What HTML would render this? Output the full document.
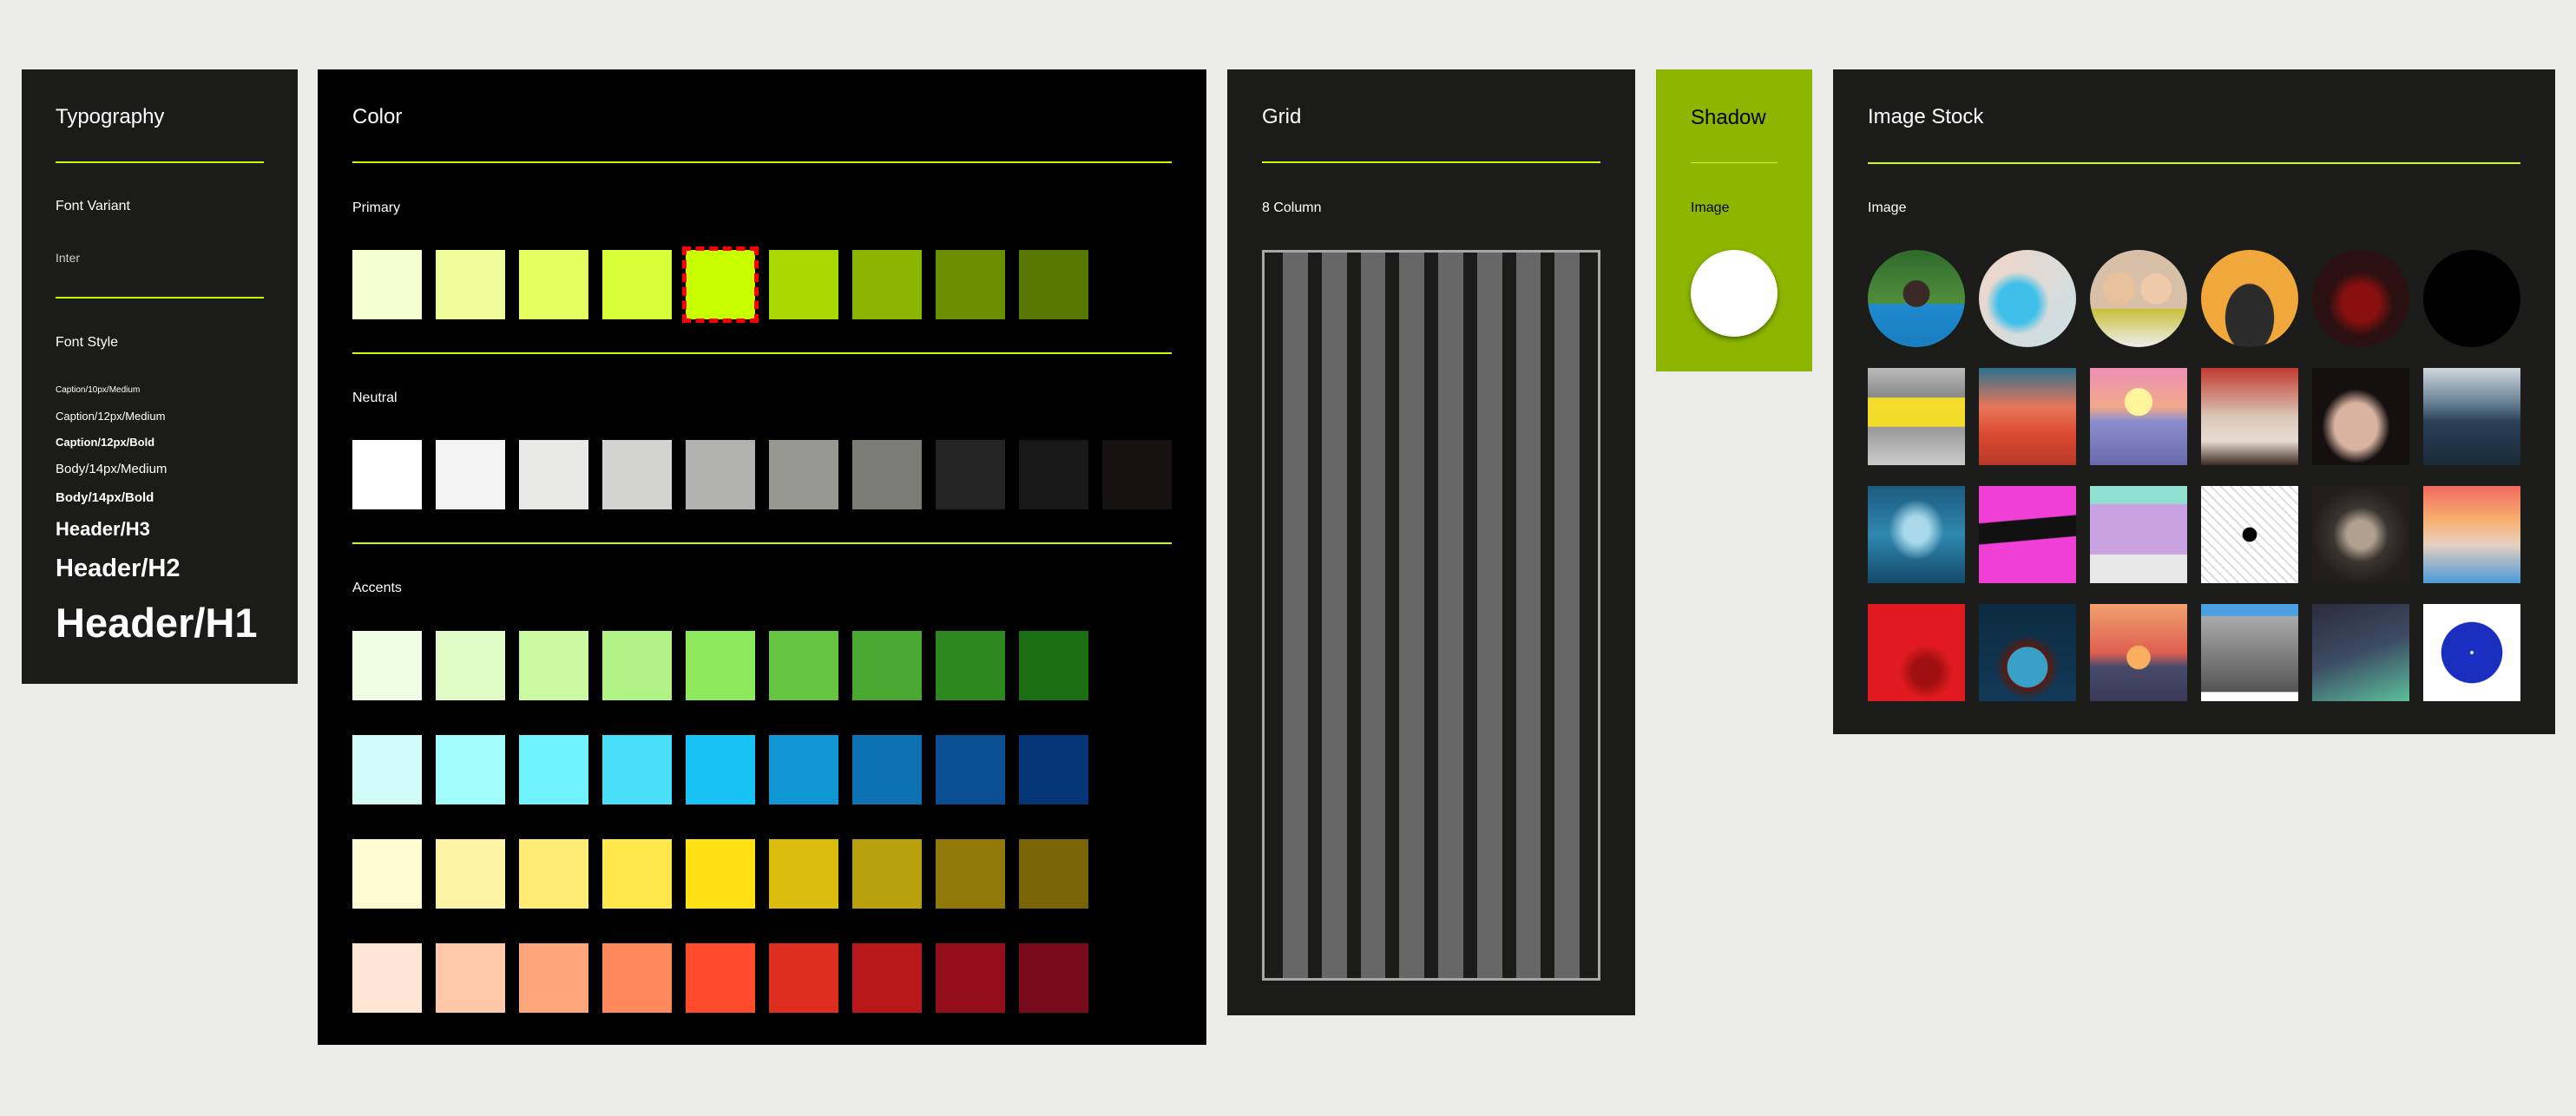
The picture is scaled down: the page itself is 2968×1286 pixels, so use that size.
<!DOCTYPE html>
<html><head><meta charset="utf-8"><style>
*{margin:0;padding:0;box-sizing:border-box}
body{width:2968px;height:1286px;background:#ebebe9;position:relative;overflow:hidden;font-family:"Liberation Sans","Noto Sans CJK JP",sans-serif;color:#fff}
.p{position:absolute}
.t{position:absolute;white-space:nowrap;line-height:1}
.title{font-size:24px}
.lab{font-size:16px}
.hr{position:absolute;height:2px;background:#c8ff00}
.sw{position:absolute;width:80px;height:80px}
.im{position:absolute;width:112px;height:112px}
.c{border-radius:50%}
</style></head><body>

<!-- Typography -->
<div class="p" style="left:25px;top:80px;width:318px;height:708px;background:#1b1b1a">
  <div class="t title" style="left:39px;top:43px">Typography</div>
  <div class="hr" style="left:39px;top:106px;width:240px"></div>
  <div class="t lab" style="left:39px;top:150px">Font Variant</div>
  <div class="t" style="left:39px;top:210px;font-size:14px;color:#ccc">Inter</div>
  <div class="hr" style="left:39px;top:262px;width:240px"></div>
  <div class="t lab" style="left:39px;top:307px">Font Style</div>
  <div class="t" style="left:39px;top:365px;font-size:10px">Caption/10px/Medium</div>
  <div class="t" style="left:39px;top:393px;font-size:13px">Caption/12px/Medium</div>
  <div class="t" style="left:39px;top:423px;font-size:13px;font-weight:bold">Caption/12px/Bold</div>
  <div class="t" style="left:39px;top:453px;font-size:15px">Body/14px/Medium</div>
  <div class="t" style="left:39px;top:486px;font-size:15px;font-weight:bold">Body/14px/Bold</div>
  <div class="t" style="left:39px;top:519px;font-size:22px;font-weight:bold">Header/H3</div>
  <div class="t" style="left:39px;top:561px;font-size:29px;font-weight:bold">Header/H2</div>
  <div class="t" style="left:39px;top:614px;font-size:47px;font-weight:bold">Header/H1</div>
</div>

<!-- Color -->
<div class="p" style="left:366px;top:80px;width:1024px;height:1124px;background:#000">
  <div class="t title" style="left:40px;top:43px">Color</div>
  <div class="hr" style="left:40px;top:106px;width:944px"></div>
  <div class="t lab" style="left:40px;top:152px">Primary</div>
  <div class="hr" style="left:40px;top:326px;width:944px"></div>
  <div class="t lab" style="left:40px;top:371px">Neutral</div>
  <div class="hr" style="left:40px;top:545px;width:944px"></div>
  <div class="t lab" style="left:40px;top:590px">Accents</div>
</div>
<div id="sw"></div>

<!-- Grid -->
<div class="p" style="left:1414px;top:80px;width:470px;height:1090px;background:#1b1b1a">
  <div class="t title" style="left:40px;top:43px">Grid</div>
  <div class="hr" style="left:40px;top:106px;width:390px"></div>
  <div class="t lab" style="left:40px;top:152px">8 Column</div>
  <div class="p" style="left:40px;top:208px;width:390px;height:842px;border:3px solid #a8a8a8">
    <div class="p" style="left:21px;top:0;width:29px;height:836px;background:#676767"></div>
    <div class="p" style="left:66px;top:0;width:29px;height:836px;background:#676767"></div>
    <div class="p" style="left:111px;top:0;width:28px;height:836px;background:#676767"></div>
    <div class="p" style="left:155px;top:0;width:29px;height:836px;background:#676767"></div>
    <div class="p" style="left:200px;top:0;width:29px;height:836px;background:#676767"></div>
    <div class="p" style="left:245px;top:0;width:29px;height:836px;background:#676767"></div>
    <div class="p" style="left:290px;top:0;width:28px;height:836px;background:#676767"></div>
    <div class="p" style="left:334px;top:0;width:29px;height:836px;background:#676767"></div>
  </div>
</div>

<!-- Shadow -->
<div class="p" style="left:1908px;top:80px;width:180px;height:348px;background:#8cb600;color:#000">
  <div class="t title" style="left:40px;top:44px">Shadow</div>
  <div class="hr" style="left:40px;top:107px;width:100px;height:1px;background:#c8ff00"></div>
  <div class="t lab" style="left:40px;top:152px">Image</div>
  <div class="p" style="left:40px;top:208px;width:100px;height:100px;border-radius:50%;background:#fff;box-shadow:0 3px 6px rgba(40,60,0,.6)"></div>
</div>

<!-- Image Stock -->
<div class="p" style="left:2112px;top:80px;width:832px;height:766px;background:#1b1b1a">
  <div class="t title" style="left:40px;top:43px">Image Stock</div>
  <div class="hr" style="left:40px;top:107px;width:752px"></div>
  <div class="t lab" style="left:40px;top:152px">Image</div>
</div>
<div id="ims"></div>

<script>
var rows=[
 [288,["#f4fdd0","#effd9b","#e5ff62","#d8ff3a","#c8ff00","#a8d800","#8cb500","#6b8e00","#567800"]],
 [507,["#ffffff","#f3f3f3","#e9e9e8","#d3d3d1","#b1b2af","#989893","#7c7c77","#232323","#181818","#161212"]],
 [727,["#effde3","#e0fbc6","#ccf8a2","#b1f287","#8de85b","#66c443","#49a831","#2e8820","#1b6e12"]],
 [847,["#d2fcf8","#a2fcfb","#70f2fd","#49dff9","#16c3f4","#1097d3","#0c72b3","#084e90","#053778"]],
 [967,["#fffbd3","#fff4a5","#ffec75","#ffe74b","#ffe014","#dabd0f","#b8a00c","#907908","#786405"]],
 [1087,["#ffe5d4","#ffc9a9","#ffa67d","#ff895c","#ff4b2b","#dd2e1f","#b8181a","#940d1b","#780a1b"]]];
var h="";
rows.forEach(function(r,ri){r[1].forEach(function(c,i){
 var ex=(ri==0&&i==4)?"outline:5px dashed #f00;outline-offset:-1px;":"";
 h+='<div class="sw" style="left:'+(406+i*96)+'px;top:'+r[0]+'px;background:'+c+';'+ex+'"></div>';});});
document.getElementById("sw").outerHTML=h;
var im=[
 [288,1,["radial-gradient(circle at 50% 45%,#3a2a25 0 18%,transparent 19%),linear-gradient(#2f6a2a 0,#4f8f3c 55%,#1e8ad0 56%,#1a7ec0 100%)",
 "radial-gradient(circle at 40% 55%,#3fc0ea 0 25%,transparent 40%),linear-gradient(135deg,#f2d6c6,#c8dfe8)",
 "radial-gradient(circle at 30% 40%,#e7c09c 0 18%,transparent 19%),radial-gradient(circle at 68% 40%,#efcaaa 0 17%,transparent 18%),linear-gradient(#d8c0a8 0,#d8c0a8 60%,#c8c03a 61%,#eee 100%)",
 "radial-gradient(ellipse at 50% 70%,#2b2b2b 0 35%,transparent 36%),#f0a83a",
 "radial-gradient(circle at 50% 55%,#8a1010 0 25%,transparent 45%),#2a1010",
 "#000"]],
 [424,0,["linear-gradient(#bbb,#888 30%,transparent 31%,transparent 60%,#999 61%,#ccc),linear-gradient(#f5e030,#f0d820)",
 "linear-gradient(#2b6f8c,#e8775a 40%,#d9472f 70%,#b83a2a)",
 "radial-gradient(circle at 50% 35%,#fff59a 0 17%,transparent 18%),linear-gradient(#ec8fb5,#f3a98a 40%,#8a8dcb 55%,#6a6aae)",
 "linear-gradient(#c23a30,#d8c7b7 50%,#e8dcd0 75%,#3b2a22)",
 "radial-gradient(ellipse at 45% 60%,#d9b3a0 0 28%,transparent 45%),#151010",
 "linear-gradient(#cfd6dc,#6b8398 35%,#2a4158 55%,#1a2a38)"]],
 [560,0,["radial-gradient(ellipse at 50% 45%,#a8d8ea 0 18%,transparent 40%),linear-gradient(#1d5a7e,#2f88b0 50%,#144a6a)",
 "linear-gradient(175deg,transparent 35%,#111 36%,#111 55%,transparent 56%),#f03fd5",
 "linear-gradient(#90e0d0 0 18%,#c9a2e2 19%,#c9a2e2 70%,#e8e8e8 71%)",
 "radial-gradient(#000 0 10%,transparent 11%),repeating-linear-gradient(45deg,#fff 0 6px,#ddd 6px 8px)",
 "radial-gradient(ellipse at 50% 50%,#b0a090 0 20%,#3a3530 40%,#221e1c 70%)",
 "linear-gradient(#f06a60,#f8b070 35%,#e8d0c0 60%,#4a9ad8)"]],
 [696,0,["radial-gradient(circle at 60% 70%,#a01010 0 15%,transparent 30%),#e01a20",
 "radial-gradient(circle at 50% 65%,#3aa0c8 0 25%,#5a1a10 26%,transparent 40%),linear-gradient(#0c2a40,#123a58)",
 "radial-gradient(circle at 50% 55%,#f8b060 0 16%,transparent 17%),linear-gradient(#f0a070,#e06050 50%,#464a6a 65%,#3a3a58)",
 "linear-gradient(#4aa0e0 0 12%,#aaa 13%,#777 60%,#555 90%,#fff 91%)",
 "linear-gradient(160deg,#2c2c3c,#3c4c64 50%,#5cbf9a)",
 "radial-gradient(circle,#fff 0 2%,#1a2fc0 3%,#1a2fc0 44%,#fff 45%)"]]];
var g="";
im.forEach(function(r){r[2].forEach(function(b,i){
 g+='<div class="im'+(r[1]?' c':'')+'" style="left:'+(2152+i*128)+'px;top:'+r[0]+'px;background:'+b+'"></div>';});});
document.getElementById("ims").outerHTML=g;
</script>
</body></html>
